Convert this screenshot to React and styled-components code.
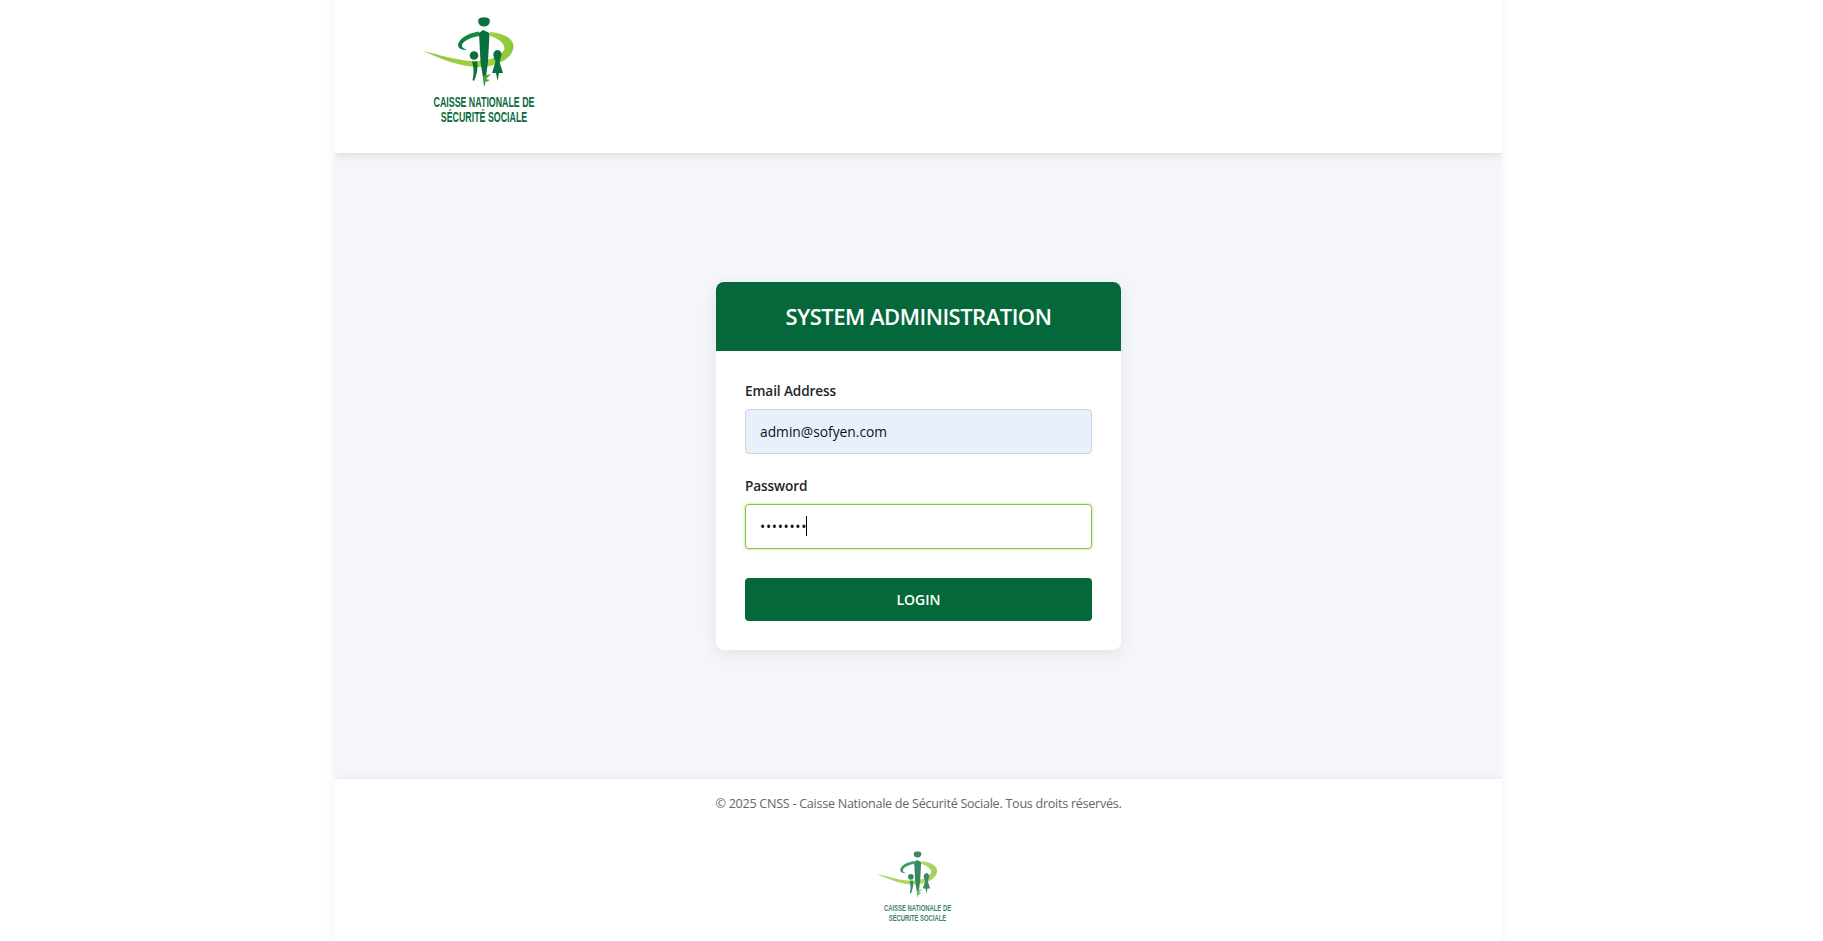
import React from "react";
import styled, { createGlobalStyle } from "styled-components";

const Global = createGlobalStyle`
  html, body { margin: 0; padding: 0; background: #fff; }
  body { font-family: "Open Sans", "Noto Sans", "Liberation Sans", sans-serif; color: #212529; }
  * { box-sizing: border-box; }
`;

const Page = styled.div`
  width: 1167px;
  height: 941px;
  margin-left: 335px;
  display: flex;
  flex-direction: column;
  overflow: hidden;
  background: #fff;
  box-shadow: 0 0 12px rgba(0, 0, 0, 0.06);
`;

const Header = styled.header`
  height: 153px;
  flex: none;
  display: flex;
  align-items: flex-start;
  padding-left: 64px;
  background: #fff;
  box-shadow: 0 2px 8px rgba(0, 0, 0, 0.12);
  position: relative;
  z-index: 1;
`;

const Main = styled.main`
  flex: 1;
  display: flex;
  align-items: flex-start;
  justify-content: center;
  padding-top: 129px;
  background: #f4f6fa;
`;

const Card = styled.section`
  width: 405px;
  height: 368px;
  background: #fff;
  border-radius: 8px;
  overflow: hidden;
  box-shadow: 0 4px 16px rgba(0, 0, 0, 0.08);
`;

const CardHeader = styled.h1`
  margin: 0;
  height: 69px;
  padding-bottom: 2px;
  display: flex;
  align-items: center;
  justify-content: center;
  background: #04683a;
  color: #fff;
  font-size: 22px;
  font-weight: 600;
  letter-spacing: -0.5px;
`;

const Form = styled.form`
  padding: 28px 29px 29px;
  display: flex;
  flex-direction: column;
`;

const Label = styled.label`
  display: block;
  height: 24px;
  margin-bottom: 6px;
  font-size: 13.6px;
  line-height: 24px;
  font-weight: 600;
  letter-spacing: -0.1px;
  color: #212529;
`;

const Field = styled.div`
  margin-bottom: 20px;
  position: relative;
`;

const Input = styled.input`
  display: block;
  width: 100%;
  height: 45px;
  padding: 0 14px;
  border-radius: 4px;
  font-family: inherit;
  font-size: 13.8px;
  letter-spacing: ${(p) => (p.$focused ? "0.7px" : "0")};
  color: #111;
  outline: none;
  border: 1px solid ${(p) => (p.$focused ? "#8cc63f" : "#ced4da")};
  background: ${(p) => (p.$filled ? "#e8f0fe" : "#fff")};
  box-shadow: ${(p) => (p.$focused ? "0 0 3px rgba(140, 198, 63, 0.7)" : "none")};
`;

const Caret = styled.span`
  position: absolute;
  left: 61px;
  top: 42px;
  width: 1px;
  height: 20px;
  background: #000;
`;

const Submit = styled.button`
  height: 43px;
  margin-top: 9px;
  border: 0;
  border-radius: 4px;
  background: #04683a;
  color: #fff;
  font-family: inherit;
  font-size: 14px;
  font-weight: 600;
`;

const Footer = styled.footer`
  height: 162px;
  flex: none;
  padding-top: 15px;
  display: flex;
  flex-direction: column;
  align-items: center;
  background: #fff;
  box-shadow: 0 -2px 6px rgba(0, 0, 0, 0.04);
  position: relative;
`;

const Copy = styled.p`
  margin: 0;
  height: 20px;
  font-size: 12.6px;
  line-height: 20px;
  letter-spacing: -0.28px;
  color: #666;
  white-space: nowrap;
`;

const FooterLogo = styled.div`
  margin-top: 26px;
  margin-right: 3px;
  opacity: 0.82;
  line-height: 0;
`;

function Logo({ width, height, id }) {
  return (
    <svg width={width} height={height} viewBox="0 0 170 140" aria-label="CNSS">
      <defs>
        <linearGradient id={`${id}-swoosh`} x1="0" y1="0" x2="1" y2="0">
          <stop offset="0" stopColor="#8cc63f" />
          <stop offset="0.7" stopColor="#a6d33c" />
          <stop offset="1" stopColor="#8cc63f" />
        </linearGradient>
        <linearGradient id={`${id}-arc`} x1="0" y1="0" x2="1" y2="0">
          <stop offset="0" stopColor="#0b7a48" />
          <stop offset="1" stopColor="#1f8f42" />
        </linearGradient>
      </defs>
      <path d="M24 51 C40 55 58 60 72 61 C86 62 100 58 105 50 C107 45 101 39 91 36 L91 32 C103 33 115 38 114.5 47 C114 57 100 66 84 67 C64 68 42 59 24 51Z" fill={`url(#${id}-swoosh)`} />
      <path d="M80 31.5 C70 33 60 38 59 45 C59 48 62 50 68 50 C64 48 62.5 47 63 45 C64 41 72 37 81 36Z" fill={`url(#${id}-arc)`} />
      <path d="M79.5 19.5 C80.5 16.5 89.5 16.5 90.5 19.5 C91.5 23 89.5 26.5 85 26.5 C80.5 26.5 78.5 23 79.5 19.5Z" fill="#0a7040" />
      <path d="M80 33 L84 30 L90.5 33 L89 62 L85.5 87 L81.5 62Z" fill="#08703f" />
      <path d="M84 76 L92 74 L87 79 L91 80 L85 83 L85 87Z" fill="#4fa13f" />
      <circle cx="75" cy="55.5" r="4.3" fill="#0a7040" />
      <path d="M73 61.5 L78.5 61.5 C79 68 78 75 75 81 L73.5 80 C75 74 75 68 73 61.5Z" fill="#0a7040" />
      <path d="M98.5 50 C102 50 103.5 54 102 57 L100.5 62 L104 73 L100 73 L98.5 81 L97 73 L93 73 L96.5 62 L94.8 57 C93.5 54 95 50 98.5 50Z" fill="#0a7040" />
      <g fontFamily="'Liberation Sans', sans-serif" fontWeight="700" fontSize="15" fill="#0a6b3d" textAnchor="middle">
        <text transform="translate(85 107) scale(0.59 1)">CAISSE NATIONALE DE</text>
        <text transform="translate(85 121.5) scale(0.59 1)">SÉCURITÉ SOCIALE</text>
      </g>
    </svg>
  );
}

export default function App() {
  return (
    <>
      <Global />
      <Page>
        <Header>
          <Logo id="top" width={170} height={140} />
        </Header>
        <Main>
          <Card>
            <CardHeader>SYSTEM ADMINISTRATION</CardHeader>
            <Form>
              <Field>
                <Label>Email Address</Label>
                <Input $filled type="email" readOnly value="admin@sofyen.com" />
              </Field>
              <Field>
                <Label>Password</Label>
                <Input $focused type="password" readOnly value="sofyen12" />
                <Caret />
              </Field>
              <Submit type="button">LOGIN</Submit>
            </Form>
          </Card>
        </Main>
        <Footer>
          <Copy>© 2025 CNSS - Caisse Nationale de Sécurité Sociale. Tous droits réservés.</Copy>
          <FooterLogo>
            <Logo id="bottom" width={113} height={93} />
          </FooterLogo>
        </Footer>
      </Page>
    </>
  );
}
